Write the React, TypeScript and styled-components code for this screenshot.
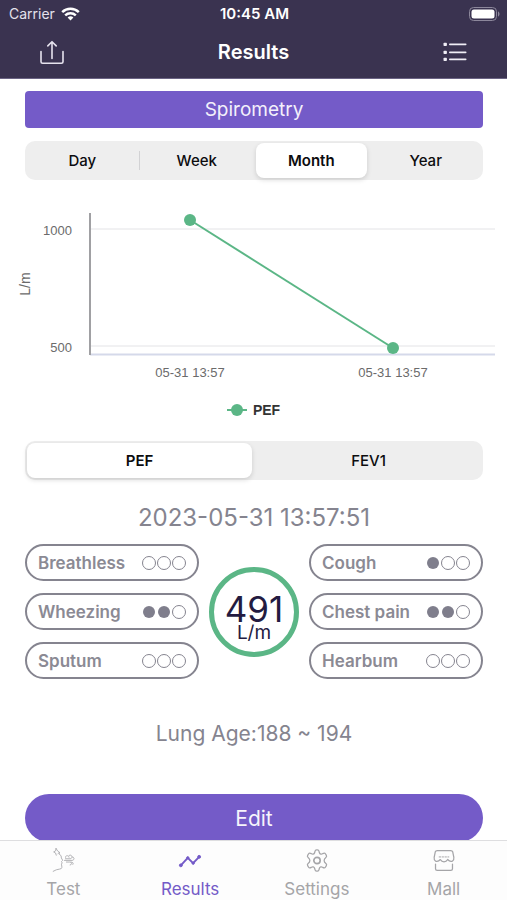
import React, { useState } from "react";
import styled, { createGlobalStyle } from "styled-components";

const GlobalStyle = createGlobalStyle`
  *, *::before, *::after { box-sizing: border-box; }
  body {
    margin: 0;
    background: #ffffff;
    font-family: Inter, "Liberation Sans", sans-serif;
    color: #0c0c0e;
  }
  button { font: inherit; color: inherit; border: 0; padding: 0; background: none; cursor: pointer; }
`;

const violet = "#745bc8";
const green = "#5bb686";
const muted = "#85848f";

const Screen = styled.div`
  display: flex;
  flex-direction: column;
  height: 100vh;
`;

const Header = styled.header`
  flex: none;
  background: #3a3350;
  color: #ffffff;
  border-bottom: 1px solid #6b6484;
`;

const StatusBar = styled.div`
  display: grid;
  grid-template-columns: 1fr auto 1fr;
  align-items: center;
  height: 26px;
  padding: 2px 7px 0 9px;
  font-size: 14px;
  line-height: 24px;
`;

const Carrier = styled.span`
  display: flex;
  align-items: center;
  gap: 6px;
  color: #e4e1ec;
`;

const Clock = styled.time`
  font-size: 15px;
  font-weight: 600;
`;

const BatterySlot = styled.span`
  display: flex;
  justify-content: flex-end;
`;

const NavBar = styled.div`
  display: flex;
  align-items: center;
  justify-content: space-between;
  height: 52px;
  padding: 0 38px;
`;

const Title = styled.h1`
  margin: 0;
  font-size: 20px;
  line-height: 28px;
  font-weight: 600;
`;

const IconButton = styled.button`
  display: flex;
  width: 28px;
  height: 28px;
  align-items: center;
  justify-content: center;
`;

const Content = styled.main`
  flex: 1;
  min-height: 0;
  overflow-y: auto;
  scrollbar-width: none;
  display: flex;
  flex-direction: column;
`;

const Section = styled.section`
  flex: none;
  padding: 0 24px 0 25px;
`;

const Banner = styled.h2`
  margin: 12px 0 13px;
  border-radius: 4px;
  background: ${violet};
  color: #f3f0fb;
  font-size: 19px;
  line-height: 37px;
  font-weight: 400;
  text-align: center;
`;

const Segments = styled.div`
  display: flex;
  height: 39px;
  padding: 2px 0;
  border-radius: 10px;
  background: #eeeeee;
`;

const Segment = styled.button<{ $active: boolean; $divided?: boolean }>`
  position: relative;
  flex: 1;
  margin: 0 2px;
  border-radius: 8px;
  font-size: 15px;
  font-weight: ${(p) => (p.$active ? 600 : 500)};
  background: ${(p) => (p.$active ? "#ffffff" : "transparent")};
  box-shadow: ${(p) => (p.$active ? "0 2px 5px rgba(0, 0, 0, 0.14)" : "none")};

  &::after {
    content: "";
    display: ${(p) => (p.$divided ? "block" : "none")};
    position: absolute;
    right: -2px;
    top: 8px;
    bottom: 8px;
    width: 1px;
    background: #d2d2d4;
  }
`;

const Figure = styled.figure`
  flex: none;
  margin: 16px 0 0;
`;

const Plot = styled.svg`
  display: block;
  width: 100%;
  font-family: "Liberation Sans", Arial, sans-serif;
  font-size: 13px;
  fill: #6b6b6b;
`;

const Legend = styled.figcaption`
  display: flex;
  align-items: center;
  justify-content: center;
  gap: 6px;
  margin: 19px 0 21px;
  font-family: "Liberation Sans", Arial, sans-serif;
  font-size: 14px;
  line-height: 20px;
  font-weight: 700;
  color: #333333;
`;

const Timestamp = styled.p`
  margin: 24px 0 12px;
  font-size: 24px;
  line-height: 28px;
  text-align: center;
  color: ${muted};
`;

const Summary = styled.div`
  display: grid;
  grid-template-columns: 1fr 90px 1fr;
  align-items: center;
  gap: 10px;
`;

const SymptomList = styled.ul`
  display: flex;
  flex-direction: column;
  gap: 12px;
  margin: 0;
  padding: 0;
  list-style: none;
`;

const Symptom = styled.li`
  display: flex;
  align-items: center;
  justify-content: space-between;
  height: 37px;
  padding: 0 11px;
  border: 2px solid ${muted};
  border-radius: 19px;
  font-size: 17px;
  font-weight: 600;
  color: #8b8a94;
`;

const Levels = styled.span`
  display: flex;
  gap: 1px;
`;

const Level = styled.i<{ $on: boolean }>`
  width: 14px;
  height: 14px;
  border-radius: 50%;
  border: 1px solid ${(p) => (p.$on ? "transparent" : muted)};
  background: ${(p) => (p.$on ? "#7f7e8c" : "transparent")};
  background-clip: padding-box;
`;

const Reading = styled.div`
  display: flex;
  flex-direction: column;
  align-items: center;
  justify-content: center;
  height: 90px;
  padding-top: 14px;
  border: 5px solid ${green};
  border-radius: 50%;
  color: #231b41;
`;

const ReadingValue = styled.strong`
  font-size: 35px;
  line-height: 28px;
  font-weight: 400;
`;

const ReadingUnit = styled.span`
  font-size: 19px;
  line-height: 20px;
`;

const LungAge = styled.p`
  margin: 41px 0 46px;
  font-size: 21px;
  line-height: 28px;
  text-align: center;
  color: ${muted};
`;

const EditButton = styled.button`
  display: block;
  width: 100%;
  height: 48px;
  margin-bottom: 12px;
  border-radius: 24px;
  background: ${violet};
  color: #f6f4fc;
  font-size: 21px;
`;

const TabBar = styled.nav`
  flex: none;
  display: flex;
  height: 60px;
  border-top: 1px solid #dedee0;
  background: #fdfdfd;
`;

const Tab = styled.button<{ $active: boolean }>`
  flex: 1;
  display: flex;
  flex-direction: column;
  align-items: center;
  padding-top: 6px;
  gap: 4px;
  font-size: 17px;
  line-height: 22px;
  color: ${(p) => (p.$active ? violet : "#a5a5a8")};
`;

const WifiIcon = () => (
  <svg width="19" height="14" viewBox="0 0 19 14" fill="none" stroke="#fff" strokeWidth="2.5" aria-hidden="true">
    <path d="M1.2 5.2a12 12 0 0 1 16.6 0" />
    <path d="M4.2 8.4a7.7 7.7 0 0 1 10.6 0" />
    <path d="M9.5 13.6 6.6 10.6a4.2 4.2 0 0 1 5.8 0z" fill="#fff" stroke="none" />
  </svg>
);

const BatteryIcon = () => (
  <svg width="31" height="14" viewBox="0 0 31 14" aria-hidden="true">
    <rect x="0.5" y="0.5" width="27" height="13" rx="4" fill="none" stroke="#8c879b" />
    <rect x="2.5" y="2.500" width="23" height="9" rx="2.5" fill="#fff" />
    <path d="M29 4.500c2 .6 2 4.400 0 5z" fill="#8c879b" />
  </svg>
);

const ShareIcon = () => (
  <svg width="26" height="26" viewBox="0 0 26 26" fill="none" stroke="#e6e3ee" strokeWidth="1.600" strokeLinecap="round" strokeLinejoin="round" aria-hidden="true">
    <path d="M2 12.500v10.200q0 1.600 1.600 1.600h18.800q1.600 0 1.600-1.600V12.500" />
    <path d="M13 19.500V3M8.800 6.900 13 2.700l4.200 4.200" />
  </svg>
);

const ListIcon = () => (
  <svg width="24" height="20" viewBox="0 0 24 20" fill="#f0eef6" aria-hidden="true">
    {[2, 10, 17].map((y) => (
      <g key={y}>
        <rect x="0.500" y={y - 1.300} width="3.400" height="3.400" rx="0.800" />
        <rect x="6" y={y - 0.400} width="17.500" height="1.600" rx="0.800" />
      </g>
    ))}
  </svg>
);

const BreathIcon = () => (
  <svg width="26" height="28" viewBox="0 0 26 28" fill="none" stroke="#b0b0b3" strokeLinecap="round" strokeLinejoin="round" aria-hidden="true">
    <path d="M5.800 1.500 5.300 4 3.300 5.100l2 1.100.7 2.300M5.800 1.500l1.600 2.600 2 1.500-1.600 1.200M9.400 5.600l-.4 1.800 2 1.600.3 2.400 1.400 2.400-1.200 1.200.6 1.500-.7 1.300.5 3.200q-.2 1.800-2.400 1.900-3.600.3-6.700 2.300" />
    <path d="M15.500 12.200h5c2.600-.3 2.200-3.900-.1-3.800-1.500.1-2 1.400-1.300 2.300M14.500 13.900h8c2.600-.2 2.500-3.700.3-3.600M16.500 15.600h3.600c2.400.3 2.100 3.200.3 3.100M21.300 15.600c1.900 0 3 1.300 2 2.500M15.600 10.700c-.1-1.500 1.400-2.300 2.600-1.500" />
  </svg>
);

const TrendIcon = () => (
  <svg width="26" height="28" viewBox="0 0 26 28" fill={violet} stroke={violet} aria-hidden="true">
    <path d="m3.500 19 7.200-7.800 5.500 5.600 6.300-6.600" fill="none" strokeWidth="2" />
    <circle cx="3.500" cy="19" r="1.500" />
    <circle cx="10.700" cy="11.200" r="1.200" />
    <circle cx="16.300" cy="16.800" r="1.200" />
    <circle cx="22.500" cy="10.200" r="1.500" />
  </svg>
);

const GearIcon = () => (
  <svg width="26" height="28" viewBox="0 0 26 28" fill="none" stroke="#a5a5a8" strokeWidth="1.300" strokeLinejoin="round" aria-hidden="true">
    <path d="M10.900 4.500q.3-1.500 1.600-1.500h1q1.300 0 1.600 1.500l.4 1.500q.3 1.100 1.400 1.400t2-.5q2-1.200 2.800.1l1 1.700q.7 1.200-.5 2.100-1.800 1.400-1.800 3.200t1.800 3.200q1.200.9.500 2.100l-1 1.700q-.8 1.300-2.800.1-.9-.8-2-.5t-1.400 1.400l-.4 1.500q-.3 1.500-1.600 1.500h-1q-1.300 0-1.600-1.500l-.4-1.500q-.3-1.100-1.400-1.400t-2 .5q-2 1.200-2.800-.1l-1-1.700q-.7-1.200.5-2.100 1.800-1.400 1.800-3.200t-1.800-3.200q-1.200-.9-.5-2.100l1-1.700q.8-1.300 2.800-.1.900.8 2 .5t1.400-1.400z" />
    <circle cx="13" cy="14" r="3.300" strokeWidth="1.700" />
  </svg>
);

const ShopIcon = () => (
  <svg width="26" height="28" viewBox="0 0 26 28" fill="none" stroke="#a5a5a8" strokeWidth="1.300" strokeLinejoin="round" strokeLinecap="round" aria-hidden="true">
    <path d="M6 3.700h14q1.700 0 2.100 1.500l1.100 5.600q.4 2.800-1.500 3.800-2.600 1-4.900-1.600-1.400 2.400-3.800 2.400t-3.800-2.400q-2.300 2.600-4.900 1.600-1.900-1-1.500-3.800l1.100-5.600Q4.300 3.700 6 3.700z" />
    <path d="M4.200 17.700v4.900q0 1.700 1.700 1.700h14.200q1.700 0 1.700-1.700v-4.900" />
    <path d="M8 10.300h1.500M11 10.300h1.500M14 10.300h1.500M17 10.300h1" strokeWidth="1" />
  </svg>
);

const points = [
  { x: 190, y: 24, label: "05-31 13:57" },
  { x: 393, y: 152, label: "05-31 13:57" },
];

const Chart = () => (
  <Plot viewBox="0 0 507 185" role="img" aria-label="PEF in L/m">
    <path d="M90 33h405M90 150h405" stroke="#e3e3e6" />
    <path d="M90 158.500h405" stroke="#d5d9ea" strokeWidth="2" />
    <path d="M90 17v142" stroke="#a0a0a3" strokeWidth="2" />
    <text x="72" y="39" textAnchor="end">1000</text>
    <text x="72" y="156" textAnchor="end">500</text>
    <text transform="translate(30 88) rotate(-90)" textAnchor="middle" fontSize="14">L/m</text>
    <polyline points={points.map((p) => `${p.x},${p.y}`).join(" ")} fill="none" stroke={green} strokeWidth="2" />
    {points.map((p) => (
      <g key={p.x}>
        <circle cx={p.x} cy={p.y} r="6" fill={green} />
        <text x={p.x} y="181" textAnchor="middle">{p.label}</text>
      </g>
    ))}
  </Plot>
);

const periods = ["Day", "Week", "Month", "Year"];
const metrics = ["PEF", "FEV1"];

const leftSymptoms = [
  { name: "Breathless", level: 0 },
  { name: "Wheezing", level: 2 },
  { name: "Sputum", level: 0 },
];
const rightSymptoms = [
  { name: "Cough", level: 1 },
  { name: "Chest pain", level: 2 },
  { name: "Hearbum", level: 0 },
];

const tabs = [
  { name: "Test", Icon: BreathIcon },
  { name: "Results", Icon: TrendIcon },
  { name: "Settings", Icon: GearIcon },
  { name: "Mall", Icon: ShopIcon },
];

type SegmentedProps = { label: string; options: string[]; value: string; onChange: (v: string) => void };

const Segmented = ({ label, options, value, onChange }: SegmentedProps) => {
  const selected = options.indexOf(value);
  return (
    <Segments role="group" aria-label={label}>
      {options.map((o, i) => (
        <Segment
          key={o}
          type="button"
          aria-pressed={o === value}
          $active={o === value}
          $divided={i < options.length - 1 && i !== selected && i + 1 !== selected}
          onClick={() => onChange(o)}
        >
          {o}
        </Segment>
      ))}
    </Segments>
  );
};

const Symptoms = ({ items }: { items: { name: string; level: number }[] }) => (
  <SymptomList>
    {items.map((s) => (
      <Symptom key={s.name}>
        {s.name}
        <Levels role="img" aria-label={`${s.level} of 3`}>
          {[1, 2, 3].map((n) => (
            <Level key={n} $on={n <= s.level} />
          ))}
        </Levels>
      </Symptom>
    ))}
  </SymptomList>
);

export default function App() {
  const [period, setPeriod] = useState("Month");
  const [metric, setMetric] = useState("PEF");
  const [tab, setTab] = useState("Results");

  return (
    <Screen>
      <GlobalStyle />
      <Header>
        <StatusBar>
          <Carrier>Carrier <WifiIcon /></Carrier>
          <Clock>10:45 AM</Clock>
          <BatterySlot><BatteryIcon /></BatterySlot>
        </StatusBar>
        <NavBar>
          <IconButton type="button" aria-label="Share"><ShareIcon /></IconButton>
          <Title>Results</Title>
          <IconButton type="button" aria-label="List"><ListIcon /></IconButton>
        </NavBar>
      </Header>

      <Content>
        <Section>
          <Banner>Spirometry</Banner>
          <Segmented label="Period" options={periods} value={period} onChange={setPeriod} />
        </Section>

        <Figure>
          <Chart />
          <Legend>
            <svg width="20" height="12" viewBox="0 0 20 12" aria-hidden="true">
              <path d="M0 6h20" stroke={green} strokeWidth="2" />
              <circle cx="10" cy="6" r="6" fill={green} />
            </svg>
            PEF
          </Legend>
        </Figure>

        <Section>
          <Segmented label="Metric" options={metrics} value={metric} onChange={setMetric} />
          <Timestamp>2023-05-31 13:57:51</Timestamp>
          <Summary>
            <Symptoms items={leftSymptoms} />
            <Reading>
              <ReadingValue>491</ReadingValue>
              <ReadingUnit>L/m</ReadingUnit>
            </Reading>
            <Symptoms items={rightSymptoms} />
          </Summary>
          <LungAge>Lung Age:188 ~ 194</LungAge>
          <EditButton type="button">Edit</EditButton>
        </Section>
      </Content>

      <TabBar aria-label="Main">
        {tabs.map(({ name, Icon }) => (
          <Tab
            key={name}
            type="button"
            $active={name === tab}
            aria-current={name === tab ? "page" : undefined}
            onClick={() => setTab(name)}
          >
            <Icon />
            {name}
          </Tab>
        ))}
      </TabBar>
    </Screen>
  );
}
